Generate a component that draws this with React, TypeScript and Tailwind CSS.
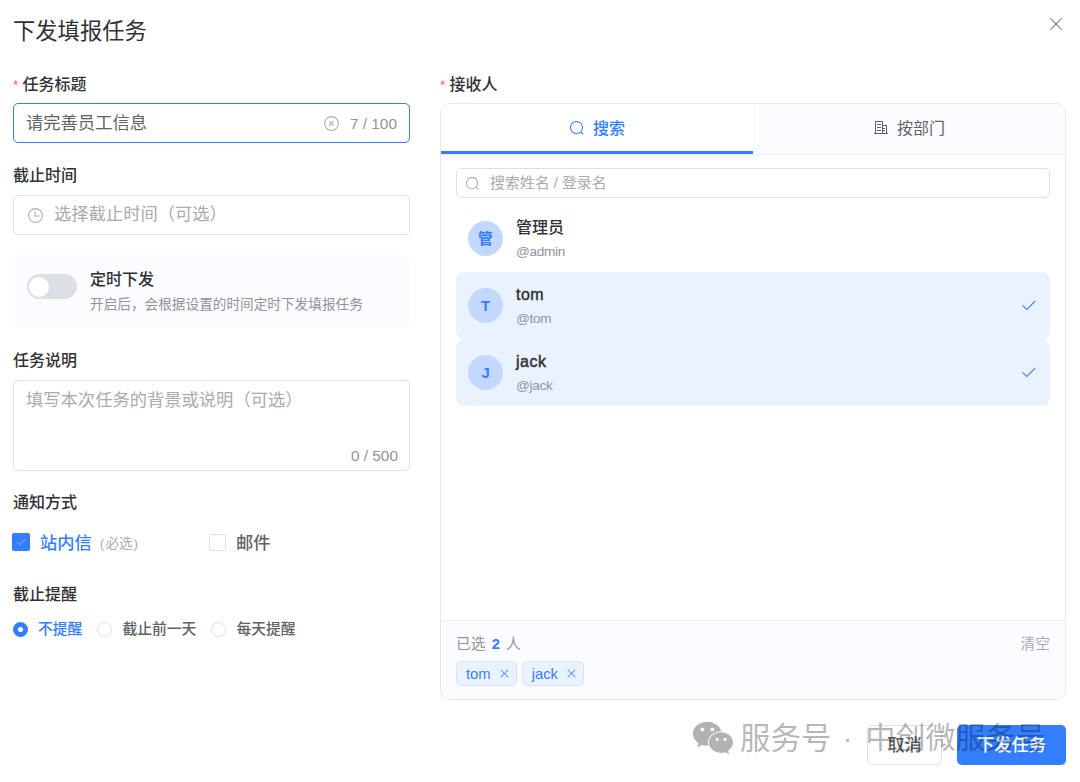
import { useState } from "react";
import type { ReactNode } from "react";
import clsx from "clsx";
import { FaWeixin } from "react-icons/fa";

const ICONS = {
  search: [
    "m795.904 750.72 124.992 124.928a32 32 0 0 1-45.248 45.248L750.656 795.904a416 416 0 1 1 45.248-45.248zM480 832a352 352 0 1 0 0-704 352 352 0 0 0 0 704z",
  ],
  close: [
    "M764.288 214.592 512 466.88 259.712 214.592a31.936 31.936 0 0 0-45.12 45.12L466.752 512 214.528 764.224a31.936 31.936 0 1 0 45.12 45.184L512 557.184l252.288 252.288a31.936 31.936 0 0 0 45.12-45.12L557.12 512.064l252.288-252.352a31.936 31.936 0 1 0-45.12-45.184z",
  ],
  check: [
    "M406.656 706.944 195.84 496.256a32 32 0 1 0-45.248 45.248l256 256 512-512a32 32 0 0 0-45.248-45.248L406.592 706.944z",
  ],
  clock: [
    "M512 896a384 384 0 1 0 0-768 384 384 0 0 0 0 768zm0 64a448 448 0 1 1 0-896 448 448 0 0 1 0 896z",
    "M480 256a32 32 0 0 1 32 32v256a32 32 0 0 1-64 0V288a32 32 0 0 1 32-32z",
    "M480 512h256q32 0 32 32t-32 32H480q-32 0-32-32t32-32z",
  ],
  circleClose: [
    "m466.752 512-90.496-90.496a32 32 0 0 1 45.248-45.248L512 466.752l90.496-90.496a32 32 0 0 1 45.248 45.248L557.248 512l90.496 90.496a32 32 0 1 1-45.248 45.248L512 557.248l-90.496 90.496a32 32 0 0 1-45.248-45.248L466.752 512z",
    "M512 896a384 384 0 1 0 0-768 384 384 0 0 0 0 768zm0 64a448 448 0 1 1 0-896 448 448 0 0 1 0 896z",
  ],
  building: [
    "M192 128v704h384V128H192zm-32-64h448a32 32 0 0 1 32 32v768a32 32 0 0 1-32 32H160a32 32 0 0 1-32-32V96a32 32 0 0 1 32-32z",
    "M256 256h256v64H256v-64zm0 192h256v64H256v-64zm0 192h256v64H256v-64zm384-128h128v64H640v-64zm0 128h128v64H640v-64zM64 832h896v64H64v-64z",
    "M640 384v448h192V384H640zm-32-64h256a32 32 0 0 1 32 32v512a32 32 0 0 1-32 32H608a32 32 0 0 1-32-32V352a32 32 0 0 1 32-32z",
  ],
};

const USERS = [
  { id: "admin", name: "管理员", initial: "管" },
  { id: "tom", name: "tom", initial: "T" },
  { id: "jack", name: "jack", initial: "J" },
];

const REMINDERS = ["不提醒", "截止前一天", "每天提醒"];

function Icon({ name, className }: { name: keyof typeof ICONS; className?: string }) {
  return (
    <svg viewBox="0 0 1024 1024" fill="currentColor" className={clsx("shrink-0", className)}>
      {ICONS[name].map(d => <path key={d} d={d} />)}
    </svg>
  );
}

function Label({ children, required }: { children: ReactNode; required?: boolean }) {
  return (
    <div className="flex h-[22px] items-center text-[16px] leading-[22px] font-medium text-[#303133]">
      {required && <span className="mr-1 text-[14px] font-normal text-[#f56c6c]">*</span>}
      {children}
    </div>
  );
}

export default function App() {
  const [tab, setTab] = useState("search");
  const [selected, setSelected] = useState(["tom", "jack"]);
  const [email, setEmail] = useState(false);
  const [reminder, setReminder] = useState(REMINDERS[0]);

  function toggle(id: string) {
    setSelected(s => (s.includes(id) ? s.filter(x => x !== id) : [...s, id]));
  }

  return (
    <div className="relative flex h-[782px] w-[1080px] flex-col overflow-hidden bg-white pr-[14px] pl-[13px] font-['Liberation_Sans','Noto_Sans_CJK_SC',sans-serif] text-[#606266]">
      {/* Header */}
      <header className="flex h-[74px] shrink-0 items-start justify-between">
        <h1 className="mt-[16px] text-[22.3px] leading-[32px] text-[#303133]">下发填报任务</h1>
        <button className="mt-[14px] text-[#909399]">
          <Icon name="close" className="size-5" />
        </button>
      </header>

      <main className="flex h-[626px] shrink-0 gap-[30px]">
        {/* Form */}
        <section className="flex w-[397px] shrink-0 flex-col">
          <Label required>任务标题</Label>
          <div className="mt-[7px] flex h-10 items-center rounded-[5px] border border-[#337dff] px-[12px] text-[17.3px]">
            <span className="flex-1 pt-[2px]">请完善员工信息</span>
            <Icon name="circleClose" className="size-[17px] text-[#a8abb2]" />
            <span className="ml-[10px] pt-px text-[15.4px] text-[#909399]">7 / 100</span>
          </div>

          <div className="mt-[22px]"><Label>截止时间</Label></div>
          <div className="mt-2 flex h-10 items-center gap-[10px] rounded-[5px] border border-[#dcdfe6] px-[13px] text-[17.3px] text-[#a8abb2]">
            <Icon name="clock" className="size-[17px]" />
            <span>选择截止时间（可选）</span>
          </div>

          <div className="mt-5 flex h-[73px] rounded-[8px] bg-[#fafcff] pt-[12px] pl-[14px]">
            <div className="mt-[7px] flex h-[25px] w-[50px] shrink-0 items-center rounded-full bg-[#dcdfe6] pl-[2px]">
              <div className="size-5 rounded-full bg-white" />
            </div>
            <div className="ml-[13px] pt-px">
              <div className="text-[16px] leading-[24px] font-medium text-[#303133]">定时下发</div>
              <div className="text-[13.65px] leading-[25px] text-[#909399]">开启后，会根据设置的时间定时下发填报任务</div>
            </div>
          </div>

          <div className="mt-[22px]"><Label>任务说明</Label></div>
          <div className="mt-2 flex h-[91px] flex-col justify-between rounded-[5px] border border-[#dcdfe6] px-[12px] pt-[6px] pb-[4px] text-[17.3px] leading-[26px] text-[#a8abb2]">
            <span>填写本次任务的背景或说明（可选）</span>
            <span className="-mr-[1px] self-end text-[15.4px] leading-[20px] text-[#909399]">0 / 500</span>
          </div>

          <div className="mt-[21px]"><Label>通知方式</Label></div>
          <div className="mt-[15px] -ml-px flex h-[26px] items-center text-[17.3px] leading-[26px] font-medium">
            <label className="flex w-[197px] items-center text-[#337dff]">
              <span className="flex size-[18px] items-center justify-center rounded-[2px] bg-[#337dff]">
                <Icon name="check" className="size-3 text-[#a8abb2]" />
              </span>
              <span className="ml-[10px] pt-px">站内信</span>
              <span className="ml-[8px] pt-[3px] text-[13.6px] font-normal text-[#a8abb2]">
                <span className="mr-px">(</span>必选<span className="ml-px">)</span>
              </span>
            </label>
            <button className="flex items-center" onClick={() => setEmail(!email)}>
              <span className={clsx("size-[17px] rounded-[3px] border", email ? "border-[#337dff] bg-[#337dff]" : "border-[#dcdfe6]")} />
              <span className="ml-[10px] pt-px">邮件</span>
            </button>
          </div>

          <div className="mt-[29px]"><Label>截止提醒</Label></div>
          <div className="mt-[11px] flex h-[24px] items-center gap-[15px] text-[14.8px] leading-[24px] font-medium">
            {REMINDERS.map(r => (
              <button key={r} onClick={() => setReminder(r)} className={clsx("flex items-center gap-[10px]", r === reminder && "text-[#337dff]")}>
                <span className={clsx("size-[15px] rounded-full", r === reminder ? "border-[5px] border-[#337dff]" : "border border-[#dcdfe6]")} />
                {r}
              </button>
            ))}
          </div>
        </section>

        {/* Receivers */}
        <section className="flex flex-1 flex-col">
          <Label required>接收人</Label>
          <div className="mt-[7px] flex flex-1 flex-col overflow-hidden rounded-[10px] border border-[#e4e7ed]">
            <div className="flex h-[51px] shrink-0 border-b border-[#ebeef5] bg-[#fafcff] text-[16px]">
              <button
                onClick={() => setTab("search")}
                className={clsx("flex flex-1 items-center justify-center gap-2 border-b-[3px] font-medium", tab === "search" ? "border-[#337dff] bg-white text-[#337dff]" : "border-transparent")}
              >
                <Icon name="search" className="size-4" />
                <span className="pt-[2px]">搜索</span>
              </button>
              <button
                onClick={() => setTab("dept")}
                className={clsx("flex flex-1 items-center justify-center gap-2 border-b-[3px]", tab === "dept" ? "border-[#337dff] bg-white text-[#337dff]" : "border-transparent")}
              >
                <Icon name="building" className="size-4" />
                <span className="pt-[2px]">按部门</span>
              </button>
            </div>

            <div className="flex flex-1 flex-col px-[15px] pt-[13px]">
              <div className="mb-[7px] flex h-[30px] items-center gap-[10px] rounded-[5px] border border-[#dcdfe6] px-[8px] text-[14.9px] text-[#a8abb2]">
                <Icon name="search" className="size-[15px]" />
                <span>搜索姓名 / 登录名</span>
              </div>
              {USERS.map(u => {
                const isSelected = selected.includes(u.id);
                return (
                  <button
                    key={u.id}
                    onClick={() => toggle(u.id)}
                    className={clsx("flex h-[67px] items-center rounded-[8px] px-3 text-left", isSelected && "bg-[#ebf2ff]")}
                  >
                    <span className="flex size-[35px] items-center justify-center rounded-full bg-[#c2d8ff] text-[14.8px] font-bold text-[#337dff]">
                      <span className="pt-px">{u.initial}</span>
                    </span>
                    <span className="ml-[13px] flex flex-1 flex-col pt-[2px]">
                      <span
                        className={clsx(
                          "text-[16px] leading-[24px] font-medium text-[#303133]",
                          /^[a-z]+$/.test(u.name) && "tracking-[0.5px] [-webkit-text-stroke:0.45px_#303133]",
                        )}
                      >
                        {u.name}
                      </span>
                      <span className="text-[13.6px] leading-[24px] tracking-[-0.3px] text-[#909399]">@{u.id}</span>
                    </span>
                    {isSelected && <Icon name="check" className="mr-[1px] size-[17px] text-[#337dff]" />}
                  </button>
                );
              })}
            </div>

            <div className="h-[79px] shrink-0 border-t border-[#ebeef5] bg-[#fafcff] px-[15px] pt-[12px]">
              <div className="flex h-[22px] items-center justify-between text-[14.8px] leading-[22px] text-[#909399]">
                <span>已选 <b className="mx-[2px] text-[#337dff]">{selected.length}</b> 人</span>
                <button className="text-[#a8abb2]" onClick={() => setSelected([])}>清空</button>
              </div>
              <div className="mt-[6px] flex gap-[5px]">
                {selected.map(id => (
                  <span key={id} className="flex h-[25px] items-center rounded-[5px] border border-[#d6e5ff] bg-[#ebf2ff] pr-[5px] pl-[9px] text-[14.8px] text-[#337dff]">
                    <span className="pt-[2px]">{id}</span>
                    <button onClick={() => toggle(id)}>
                      <Icon name="close" className="ml-[7px] size-[13px]" />
                    </button>
                  </span>
                ))}
              </div>
            </div>
          </div>
        </section>
      </main>

      {/* Actions */}
      <footer className="mt-[25px] flex justify-end gap-[15px] text-[17.3px] font-medium">
        <button className="h-10 w-[75px] rounded-[5px] border border-[#dcdfe6] pt-px">取消</button>
        <button className="h-10 w-[109px] rounded-[5px] bg-[#337dff] pt-[2px] text-white">下发任务</button>
      </footer>

      {/* Account mark over the footer */}
      <div className="pointer-events-none absolute top-[717px] left-[692px] flex items-center whitespace-nowrap text-black/30">
        <FaWeixin className="size-[42px]" />
        <span className="ml-[6px] text-[30.5px] leading-[42px]">服务号</span>
        <span className="ml-[11px] text-[30px] leading-[42px]">·</span>
        <span className="ml-[13px] text-[30px] leading-[42px]">中创微服务号</span>
      </div>
    </div>
  );
}
